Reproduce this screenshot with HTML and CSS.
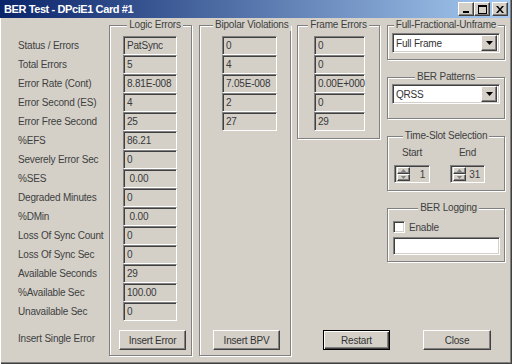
FILE: index.html
```html
<!DOCTYPE html>
<html lang="en">
<head>
    <meta charset="UTF-8">
    <title>BER Test - DPciE1 Card #1</title>
    <link rel="stylesheet" href="styles.css">
</head>
<body>
    <div class="window">
        <div class="titlebar">
            <span class="title">BER Test - DPciE1 Card #1</span>
            <div class="caption-buttons">
                <span class="cap-btn"><svg width="8" height="7" viewBox="0 0 8 7"><rect x="1" y="5" width="6" height="2" fill="#000"/></svg></span>
                <span class="cap-btn"><svg width="9" height="9" viewBox="0 0 9 9"><rect x="0.5" y="0.5" width="8" height="8" fill="none" stroke="#000"/><rect x="0" y="0" width="9" height="2" fill="#000"/></svg></span>
                <span class="cap-btn close"><svg width="8" height="7" viewBox="0 0 8 7"><path d="M0 0h2l2 2.5 2-2.5h2l-3 3.5 3 3.5h-2l-2-2.5-2 2.5h-2l3-3.5z" fill="#000"/></svg></span>
            </div>
        </div>

        <div class="content">
            <!-- row captions -->
            <div class="labels">
                <div class="label">Status / Errors</div>
                <div class="label">Total Errors</div>
                <div class="label">Error Rate (Cont)</div>
                <div class="label">Error Second (ES)</div>
                <div class="label">Error Free Second</div>
                <div class="label">%EFS</div>
                <div class="label">Severely Error Sec</div>
                <div class="label">%SES</div>
                <div class="label">Degraded Minutes</div>
                <div class="label">%DMin</div>
                <div class="label">Loss Of Sync Count</div>
                <div class="label">Loss Of Sync Sec</div>
                <div class="label">Available Seconds</div>
                <div class="label">%Available Sec</div>
                <div class="label">Unavailable Sec</div>
                <div class="label last">Insert Single Error</div>
            </div>

            <div class="group logic">
                <div class="group-title">Logic Errors</div>
                <div class="fields">
                    <div class="field">PatSync</div>
                    <div class="field">5</div>
                    <div class="field">8.81E-008</div>
                    <div class="field">4</div>
                    <div class="field">25</div>
                    <div class="field">86.21</div>
                    <div class="field">0</div>
                    <div class="field"> 0.00</div>
                    <div class="field">0</div>
                    <div class="field"> 0.00</div>
                    <div class="field">0</div>
                    <div class="field">0</div>
                    <div class="field">29</div>
                    <div class="field">100.00</div>
                    <div class="field">0</div>
                </div>
                <button class="btn">Insert Error</button>
            </div>

            <div class="group bipolar">
                <div class="group-title">Bipolar Violations</div>
                <div class="fields">
                    <div class="field">0</div>
                    <div class="field">4</div>
                    <div class="field">7.05E-008</div>
                    <div class="field">2</div>
                    <div class="field">27</div>
                </div>
                <button class="btn">Insert BPV</button>
            </div>

            <div class="side">
                <div class="side-top">
                    <div class="group frame">
                        <div class="group-title">Frame Errors</div>
                        <div class="fields">
                            <div class="field">0</div>
                            <div class="field">0</div>
                            <div class="field">0.00E+000</div>
                            <div class="field">0</div>
                            <div class="field">29</div>
                        </div>
                    </div>

                    <div class="right-stack">
                        <div class="group ffu">
                            <div class="group-title">Full-Fractional-Unframe</div>
                            <div class="combo">
                                <span class="combo-text">Full Frame</span>
                                <span class="combo-btn"><svg width="7" height="4" viewBox="0 0 7 4"><path d="M0 0h7l-3.5 4z" fill="#000"/></svg></span>
                            </div>
                        </div>

                        <div class="group patterns">
                            <div class="group-title">BER Patterns</div>
                            <div class="combo">
                                <span class="combo-text">QRSS</span>
                                <span class="combo-btn"><svg width="7" height="4" viewBox="0 0 7 4"><path d="M0 0h7l-3.5 4z" fill="#000"/></svg></span>
                            </div>
                        </div>

                        <div class="group timeslot">
                            <div class="group-title">Time-Slot Selection</div>
                            <div class="slots">
                                <div class="slot">
                                    <div class="slot-label">Start</div>
                                    <div class="spin">
                                        <div class="spin-btns">
                                            <span class="spin-btn"><svg width="5" height="3" viewBox="0 0 5 3"><path d="M0 3h5l-2.5-3z" fill="#808080"/></svg></span>
                                            <span class="spin-btn"><svg width="5" height="3" viewBox="0 0 5 3"><path d="M0 0h5l-2.5 3z" fill="#808080"/></svg></span>
                                        </div>
                                        <span class="spin-value">1</span>
                                    </div>
                                </div>
                                <div class="slot">
                                    <div class="slot-label">End</div>
                                    <div class="spin">
                                        <div class="spin-btns">
                                            <span class="spin-btn"><svg width="5" height="3" viewBox="0 0 5 3"><path d="M0 3h5l-2.5-3z" fill="#808080"/></svg></span>
                                            <span class="spin-btn"><svg width="5" height="3" viewBox="0 0 5 3"><path d="M0 0h5l-2.5 3z" fill="#808080"/></svg></span>
                                        </div>
                                        <span class="spin-value">31</span>
                                    </div>
                                </div>
                            </div>
                        </div>

                        <div class="group logging">
                            <div class="group-title">BER Logging</div>
                            <label class="check-row"><span class="check"></span>Enable</label>
                            <div class="text-input"></div>
                        </div>
                    </div>
                </div>

                <div class="bottom-buttons">
                    <button class="btn default">Restart</button>
                    <button class="btn close-btn">Close</button>
                </div>
            </div>
        </div>
    </div>
</body>
</html>
```

FILE: styles.css
```css
/* General */
* {
    box-sizing: border-box;
}

body {
    margin: 0;
    background: #d4d0c8;
    font-family: 'Liberation Sans', Arial, sans-serif;
    font-size: 10px;
    letter-spacing: -0.2px;
    color: #404040;
}

.window {
    width: 512px;
    height: 364px;
    display: flex;
    flex-direction: column;
    background: #d4d0c8;
    box-shadow: inset 1px 0 0 #ffffff, inset -1px -1px 0 #404040, inset -2px -2px 0 #808080;
}

/* Title bar */
.titlebar {
    height: 18px;
    margin-right: 2px;
    display: flex;
    align-items: center;
    justify-content: space-between;
    background: linear-gradient(to right, #0a246a, #a6caf0);
}

.title {
    padding-left: 4px;
    font-size: 11px;
    font-weight: bold;
    letter-spacing: -0.4px;
    color: #ffffff;
}

.caption-buttons {
    display: flex;
    margin-right: 2px;
}

.cap-btn {
    width: 16px;
    height: 14px;
    display: flex;
    align-items: center;
    justify-content: center;
    background: #d4d0c8;
    border: 1px solid;
    border-color: #ffffff #404040 #404040 #ffffff;
    box-shadow: inset -1px -1px 0 #808080;
}

.cap-btn.close {
    margin-left: 2px;
}

/* Main area */
.content {
    flex: 1;
    display: flex;
    padding: 7px 0 8px 18px;
}

.labels {
    width: 91px;
    display: flex;
    flex-direction: column;
    padding-top: 11px;
}

.label {
    height: 19px;
    line-height: 19px;
    white-space: nowrap;
}

.label.last {
    margin-top: auto;
    margin-bottom: 7px;
    height: 20px;
    line-height: 20px;
}

/* Group boxes (etched) */
.group {
    display: flex;
    flex-direction: column;
    align-items: flex-start;
    border: 1px solid #808080;
    box-shadow: inset 1px 1px 0 #ffffff, 1px 1px 0 #ffffff;
}

.group-title {
    align-self: center;
    margin: -7px auto 5px;
    padding: 0 2px;
    height: 12px;
    line-height: 12px;
    background: #d4d0c8;
    white-space: nowrap;
}

.logic {
    width: 83px;
    margin-right: 7px;
    padding: 0 0 5px 9px;
}

.logic .fields {
    width: 54px;
    margin-left: 4px;
}

.bipolar {
    width: 92px;
    margin-right: 6px;
    padding: 0 0 5px 13px;
}

.bipolar .fields {
    width: 55px;
    margin-left: 9px;
}

.fields {
    display: flex;
    flex-direction: column;
}

.field {
    height: 19px;
    line-height: 17px;
    padding-left: 3px;
    white-space: pre;
    color: #383838;
    border: 1px solid;
    border-color: #808080 #ffffff #ffffff #808080;
    box-shadow: inset 1px 1px 0 #404040, inset -1px -1px 0 #d4d0c8;
}

/* Buttons */
.btn {
    margin-top: auto;
    width: 67px;
    height: 20px;
    padding: 0;
    font-family: 'Liberation Sans', Arial, sans-serif;
    font-size: 10px;
    letter-spacing: -0.2px;
    color: #333333;
    background: #d4d0c8;
    border: 1px solid;
    border-color: #ffffff #404040 #404040 #ffffff;
    box-shadow: inset -1px -1px 0 #808080;
}

.btn.default {
    border-color: #000000;
    box-shadow: inset 1px 1px 0 #ffffff, inset -1px -1px 0 #404040, inset -2px -2px 0 #808080;
}

.close-btn {
    width: 68px;
}

/* Right side */
.side {
    flex: 1;
    display: flex;
    flex-direction: column;
}

.side-top {
    display: flex;
    align-items: flex-start;
}

.frame {
    width: 83px;
    height: 114px;
}

.frame .fields {
    width: 51px;
    margin-left: 16px;
}

.right-stack {
    width: 118px;
    margin-left: 7px;
    display: flex;
    flex-direction: column;
}

.ffu {
    height: 35px;
    margin-bottom: 17px;
}

.ffu .group-title {
    margin-bottom: 2px;
}

.patterns {
    height: 42px;
    margin-bottom: 17px;
}

.patterns .group-title {
    margin-bottom: 1px;
}

.combo {
    width: 108px;
    height: 20px;
    margin-left: 4px;
    display: flex;
    align-items: center;
    justify-content: space-between;
    background: #ffffff;
    border: 1px solid;
    border-color: #808080 #ffffff #ffffff #808080;
    box-shadow: inset 1px 1px 0 #404040, inset -1px -1px 0 #d4d0c8;
    padding: 2px;
}

.combo-text {
    padding-left: 1px;
    color: #333333;
}

.combo-btn {
    width: 16px;
    height: 16px;
    display: flex;
    align-items: center;
    justify-content: center;
    background: #d4d0c8;
    border: 1px solid;
    border-color: #ffffff #404040 #404040 #ffffff;
    box-shadow: inset -1px -1px 0 #808080;
}

/* Time slots */
.timeslot {
    height: 55px;
    margin-bottom: 17px;
}

.slots {
    display: flex;
    gap: 20px;
    padding-left: 6px;
}

.slot {
    display: flex;
    flex-direction: column;
    align-items: center;
}

.slot-label {
    height: 12px;
    line-height: 12px;
    margin-bottom: 6px;
}

.spin {
    width: 36px;
    height: 18px;
    display: flex;
    align-items: center;
    border: 1px solid;
    border-color: #808080 #ffffff #ffffff #808080;
    box-shadow: inset 1px 1px 0 #404040, inset -1px -1px 0 #d4d0c8;
    padding: 1px;
}

.slot:last-child .spin {
    width: 35px;
}

.spin-btns {
    display: flex;
    flex-direction: column;
    margin-left: 1px;
}

.spin-btn {
    width: 13px;
    height: 7px;
    display: flex;
    align-items: center;
    justify-content: center;
    background: #d4d0c8;
    border: 1px solid;
    border-color: #ffffff #404040 #404040 #ffffff;
    box-shadow: inset -1px -1px 0 #808080;
}

.spin-value {
    flex: 1;
    text-align: right;
    padding-right: 3px;
}

/* Logging */
.logging {
    height: 54px;
    padding-left: 5px;
}

.logging .group-title {
    margin-bottom: 7px;
}

.check-row {
    display: flex;
    align-items: center;
    height: 12px;
    gap: 4px;
}

.check {
    width: 12px;
    height: 12px;
    background: #ffffff;
    border: 1px solid;
    border-color: #808080 #ffffff #ffffff #808080;
    box-shadow: inset 1px 1px 0 #404040, inset -1px -1px 0 #d4d0c8;
}

.text-input {
    width: 107px;
    height: 18px;
    margin-top: 4px;
    background: #ffffff;
    border: 1px solid;
    border-color: #808080 #ffffff #ffffff #808080;
    box-shadow: inset 1px 1px 0 #404040, inset -1px -1px 0 #d4d0c8;
}

.bottom-buttons {
    margin-top: auto;
    margin-bottom: 6px;
    padding-left: 26px;
    display: flex;
    gap: 33px;
}
```
